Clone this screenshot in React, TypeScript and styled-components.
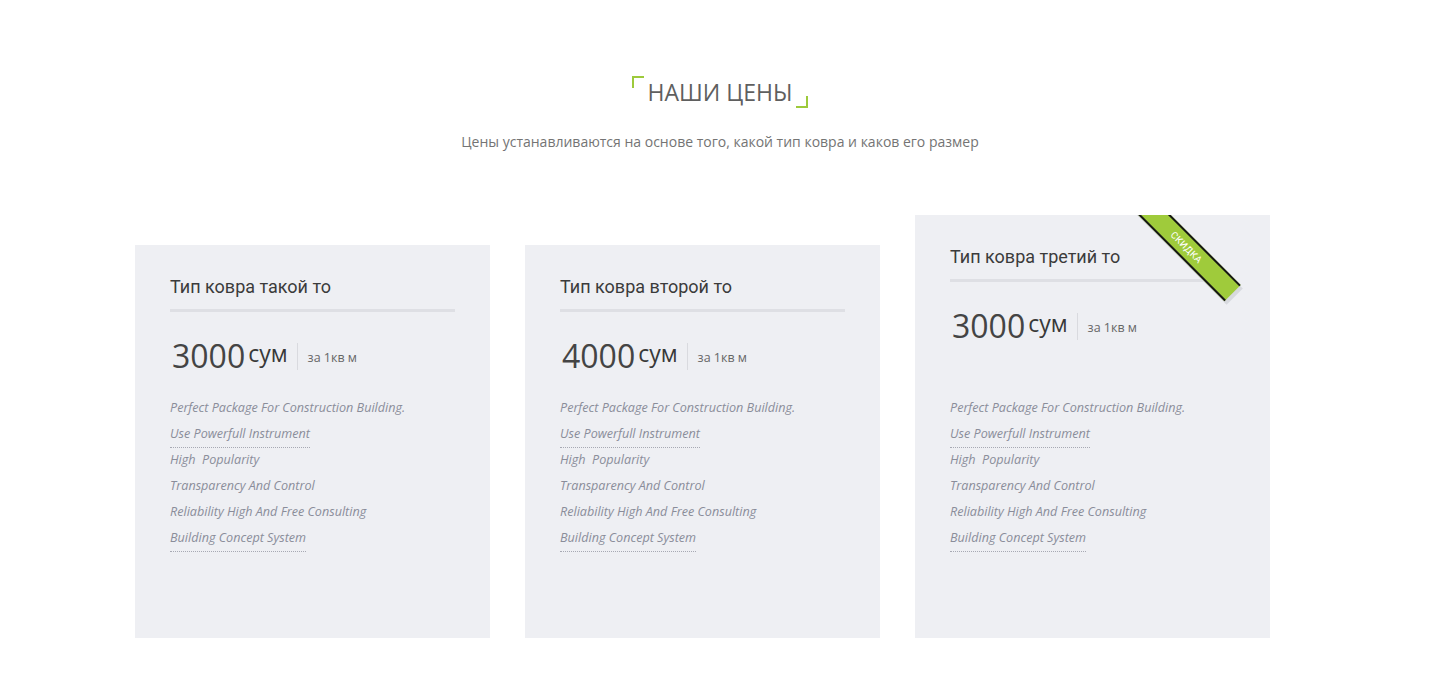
import React from "react";
import styled, { createGlobalStyle } from "styled-components";

const GlobalStyle = createGlobalStyle`
  html, body { margin: 0; padding: 0; background: #ffffff; }
  body { font-family: "Open Sans", "Liberation Sans", sans-serif; }
  * { box-sizing: border-box; }
`;

const Section = styled.section`
  padding-top: 76px;
  padding-bottom: 58px;
  display: flex;
  flex-direction: column;
  align-items: center;
`;

const Heading = styled.h2`
  position: relative;
  margin: 0;
  padding: 0 16px;
  font-family: "Open Sans", sans-serif;
  font-weight: 400;
  font-size: 23px;
  line-height: 32px;
  color: #5f5f5f;
  text-transform: uppercase;
  &::before,
  &::after {
    content: "";
    position: absolute;
    width: 10px;
    height: 10px;
    border: 0 solid #9dca3b;
  }
  &::before {
    top: 0;
    left: 0;
    border-top-width: 2px;
    border-left-width: 2px;
  }
  &::after {
    bottom: 0;
    right: 0;
    border-bottom-width: 2px;
    border-right-width: 2px;
  }
`;

const Subtitle = styled.p`
  margin: 24px 0 0;
  font-family: "Open Sans", sans-serif;
  font-size: 14px;
  line-height: 20px;
  color: #747474;
`;

const Grid = styled.div`
  width: 1170px;
  margin-top: 63px;
  display: grid;
  grid-template-columns: repeat(3, 355px);
  column-gap: 35px;
  align-items: end;
`;

const Card = styled.div`
  position: relative;
  overflow: hidden;
  background: #eeeff3;
  padding: 30px 35px 87px;
`;

const Title = styled.h3`
  margin: 0;
  padding-bottom: 10px;
  border-bottom: 3px solid #dedfe4;
  font-family: Roboto, "Open Sans", sans-serif;
  font-weight: 400;
  font-size: 18px;
  line-height: 24px;
  color: #3b3b3b;
`;

const PriceRow = styled.div`
  margin-top: 24px;
  display: flex;
  align-items: center;
  height: 40px;
`;

const Amount = styled.span`
  margin-left: 2px;
  font-family: "Open Sans", sans-serif;
  font-size: 32px;
  line-height: 40px;
  color: #444444;
`;

const Currency = styled.span`
  margin-left: 3px;
  font-family: "Open Sans", sans-serif;
  font-size: 23px;
  line-height: 30px;
  color: #383838;
  align-self: flex-start;
  margin-top: 2px;
`;

const Divider = styled.span`
  width: 1px;
  height: 27px;
  background: #d9dadf;
  margin: 0 10px 0 9px;
`;

const Unit = styled.span`
  font-family: "Open Sans", sans-serif;
  font-size: 12.5px;
  color: #666666;
  margin-top: 2px;
`;

const Features = styled.ul<{ $extra?: boolean }>`
  list-style: none;
  margin: ${(p) => (p.$extra ? "49px" : "19px")} 0 0;
  padding: 0;
`;

const Feature = styled.li`
  font-family: "Open Sans", sans-serif;
  font-style: italic;
  font-size: 12.6px;
  line-height: 26px;
  color: #8a8d9a;
  white-space: pre;
`;

const Dotted = styled.span`
  padding-bottom: 5px;
  border-bottom: 1px dotted #a7a9b3;
`;

const Ribbon = styled.div`
  position: absolute;
  left: 181px;
  top: 10px;
  width: 160px;
  height: 23px;
  background: #9fcb3b;
  border-top: 2px solid #151515;
  border-bottom: 2px solid #151515;
  transform: rotate(45deg);
  box-shadow: 4px 1px 0 #d7d9de;
  display: flex;
  align-items: center;
  justify-content: center;
  padding-left: 30px;
  font-family: Roboto, "Open Sans", sans-serif;
  font-size: 9.5px;
  color: #ffffff;
  text-transform: uppercase;
  letter-spacing: 0.2px;
`;

type Item = { text: string; dotted?: boolean };

const features: Item[] = [
  { text: "Perfect Package For Construction Building." },
  { text: "Use Powerfull Instrument", dotted: true },
  { text: "High  Popularity" },
  { text: "Transparency And Control" },
  { text: "Reliability High And Free Consulting" },
  { text: "Building Concept System", dotted: true },
];

type Plan = { title: string; price: string; featured?: boolean };

const plans: Plan[] = [
  { title: "Тип ковра такой то", price: "3000" },
  { title: "Тип ковра второй то", price: "4000" },
  { title: "Тип ковра третий то", price: "3000", featured: true },
];

export default function App() {
  return (
    <>
      <GlobalStyle />
      <Section>
        <Heading>Наши цены</Heading>
        <Subtitle>
          Цены устанавливаются на основе того, какой тип ковра и каков его размер
        </Subtitle>
        <Grid>
          {plans.map((plan) => (
            <Card key={plan.title}>
              {plan.featured && <Ribbon>скидка</Ribbon>}
              <Title>{plan.title}</Title>
              <PriceRow>
                <Amount>{plan.price}</Amount>
                <Currency>сум</Currency>
                <Divider />
                <Unit>за 1кв м</Unit>
              </PriceRow>
              <Features $extra={plan.featured}>
                {features.map((f) => (
                  <Feature key={f.text}>
                    {f.dotted ? <Dotted>{f.text}</Dotted> : f.text}
                  </Feature>
                ))}
              </Features>
            </Card>
          ))}
        </Grid>
      </Section>
    </>
  );
}
